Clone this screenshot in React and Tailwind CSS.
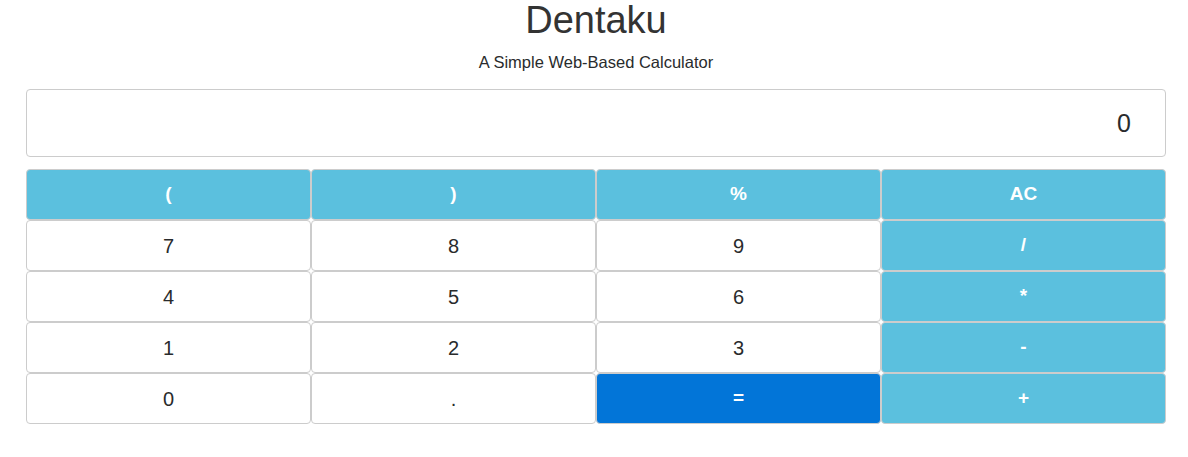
import { useState } from 'react';

const keys = [
  { label: '(', kind: 'info' },
  { label: ')', kind: 'info' },
  { label: '%', kind: 'info' },
  { label: 'AC', kind: 'info' },
  { label: '7', kind: 'plain' },
  { label: '8', kind: 'plain' },
  { label: '9', kind: 'plain' },
  { label: '/', kind: 'info' },
  { label: '4', kind: 'plain' },
  { label: '5', kind: 'plain' },
  { label: '6', kind: 'plain' },
  { label: '*', kind: 'info' },
  { label: '1', kind: 'plain' },
  { label: '2', kind: 'plain' },
  { label: '3', kind: 'plain' },
  { label: '-', kind: 'info' },
  { label: '0', kind: 'plain' },
  { label: '.', kind: 'plain' },
  { label: '=', kind: 'primary' },
  { label: '+', kind: 'info' },
];

const styles = {
  info: 'bg-[#5bc0de] text-white font-bold text-[19px]',
  plain: 'bg-white text-[#292b2c] text-[20px]',
  primary: 'bg-[#0275d8] text-white font-bold text-[19px]',
};

const App = () => {
  const [display, setDisplay] = useState('0');

  const press = (label) => {
    if (label === 'AC') return setDisplay('0');
    if (label === '=') {
      try {
        // eslint-disable-next-line no-new-func
        const result = Function(`return (${display.replace(/%/g, '/100')})`)();
        setDisplay(String(result));
      } catch {
        setDisplay('Error');
      }
      return;
    }
    setDisplay(display === '0' || display === 'Error' ? label : display + label);
  };

  return (
    <div className="min-h-[457px] bg-white font-['Liberation_Sans',Arial,sans-serif] text-[#373a3c]">
      <div className="ml-[26px] w-[1140px]">
        <div className="text-center">
          <h1 className="text-[38px] leading-[40px] text-[#333]">Dentaku</h1>
          <p className="mt-[12px] text-[16.5px] leading-[20px] text-[#292b2c]">
            A Simple Web-Based Calculator
          </p>
        </div>

        <div className="mt-[17px] flex h-[68px] items-center justify-end rounded-[4px] border border-[#ccc] bg-white pr-[34px] pt-[2px] text-[25px] text-[#292b2c]">
          {display}
        </div>

        <div className="mt-[12px] grid grid-cols-4">
          {keys.map((key) => (
            <button
              key={key.label}
              onClick={() => press(key.label)}
              className={`flex h-[51px] items-center justify-center rounded-[4px] border border-[#ccc] ${styles[key.kind]}`}
            >
              {key.label}
            </button>
          ))}
        </div>
      </div>
    </div>
  );
};

export default App;
